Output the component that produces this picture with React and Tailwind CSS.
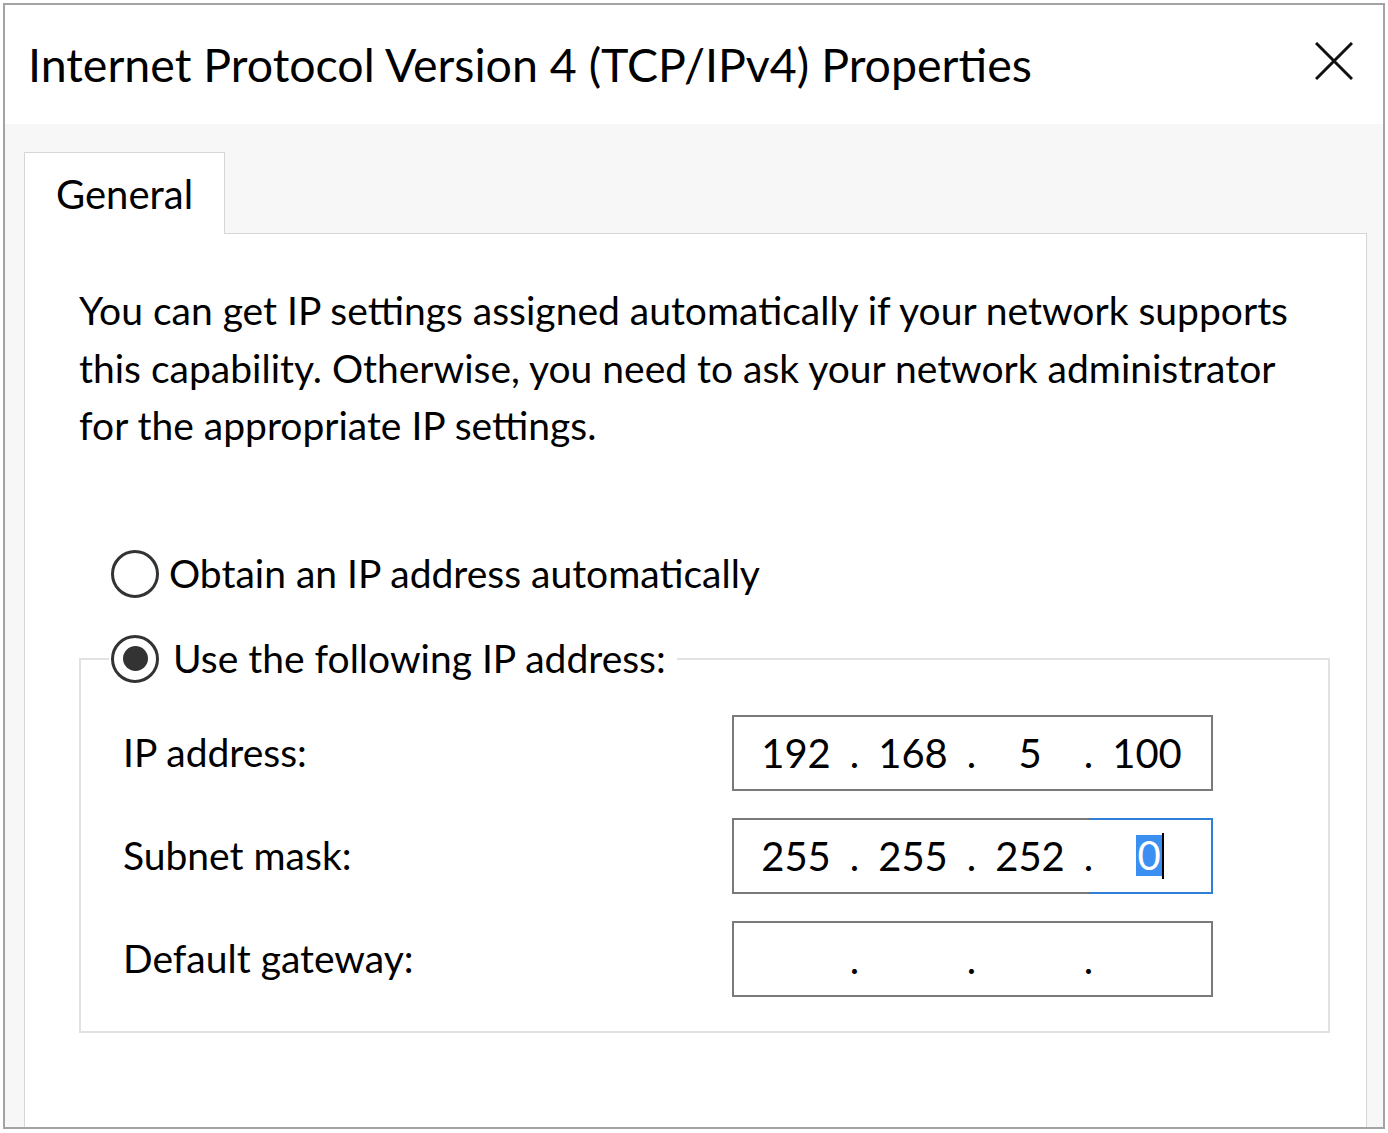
import React from "react";

function Radio({ checked }) {
    return (
        <span className="w-[48px] h-[48px] rounded-full border-[3px] border-[#333333] bg-white flex items-center justify-center shrink-0">
            {checked && <span className="w-[25px] h-[25px] rounded-full bg-[#333333]" />}
        </span>
    );
}

function IpBox({ parts, focused }) {
    return (
        <div className="w-[481px] h-[76px] border-2 border-[#7a7a7a] bg-white flex items-center pl-[12px] text-[40px] text-black">
            {parts.map((p, i) => (
                <React.Fragment key={i}>
                    {i === 3 && focused ? (
                        <div className="w-[94px] h-[72px] -my-[2px] ml-[-8px] pl-[14px] pr-[14px] mr-[-14px] box-content flex items-center justify-center border-t-2 border-b-2 border-r-2 border-[#2f7fd6]">
                            <span className="flex items-center">
                                <span className="bg-[#3b8ff0] text-white leading-[41px] px-[1px]">{p}</span>
                                <span className="w-[2px] h-[46px] bg-black" />
                            </span>
                        </div>
                    ) : (
                        <div className="w-[100px] text-center leading-none">{p}</div>
                    )}
                    {i < 3 && <div className="w-[17px] text-center leading-none">.</div>}
                </React.Fragment>
            ))}
        </div>
    );
}

function Row({ label, parts, focused }) {
    return (
        <div className="flex items-center">
            <div className="w-[651px] pl-[42px] text-[39px] leading-none">{label}</div>
            <IpBox parts={parts} focused={focused} />
        </div>
    );
}

export default function App() {
    return (
        <div
            className="w-[1388px] h-[1133px] bg-white overflow-hidden text-black"
            style={{ fontFamily: "Lato, 'Open Sans', sans-serif" }}
        >
            <div className="ml-[3px] mt-[3px] w-[1382px] h-[1126px] border-2 border-[#a3a3a3] flex flex-col">
                <div className="h-[119px] bg-white flex items-center justify-between pl-[23px] pr-[30px] shrink-0">
                    <h1 className="text-[46.5px] leading-none font-normal whitespace-nowrap">
                        Internet Protocol Version 4 (TCP/IPv4) Properties
                    </h1>
                    <svg width="38" height="38" viewBox="0 0 38 38" className="mt-[-8px]">
                        <path d="M1 1 L37 37 M37 1 L1 37" stroke="#111111" strokeWidth="3" fill="none" />
                    </svg>
                </div>

                <div className="flex-1 bg-[#f7f7f7] pl-[19px] pr-[16px] pt-[28px] flex flex-col">
                    <div className="w-[201px] h-[82px] bg-white border border-b-0 border-[#d6d6d6] mb-[-1px] relative z-10 flex items-center pl-[31px] text-[40px]">
                        General
                    </div>
                    <div className="flex-1 bg-white border border-b-0 border-[#d6d6d6] pl-[54px] pr-[36px] pt-[48px]">
                        <p className="text-[39px] leading-[57.5px] whitespace-nowrap">
                            You can get IP settings assigned automatically if your network supports
                            <br />
                            this capability. Otherwise, you need to ask your network administrator
                            <br />
                            for the appropriate IP settings.
                        </p>

                        <div className="mt-[95px] flex items-center pl-[32px] text-[39px] leading-none">
                            <Radio />
                            <span className="ml-[10px]">Obtain an IP address automatically</span>
                        </div>

                        <fieldset className="mt-[37px] w-[1251px] border-2 border-[#e2e2e2] pb-[34px]">
                            <legend className="ml-[28px] pl-[2px] pr-[11px] flex items-center text-[39px] leading-none">
                                <Radio checked />
                                <span className="ml-[14px]">Use the following IP address:</span>
                            </legend>
                            <div className="mt-[32px] flex flex-col gap-[27px]">
                                <Row label="IP address:" parts={["192", "168", "5", "100"]} />
                                <Row label="Subnet mask:" parts={["255", "255", "252", "0"]} focused />
                                <Row label="Default gateway:" parts={["", "", "", ""]} />
                            </div>
                        </fieldset>
                    </div>
                </div>
            </div>
        </div>
    );
}
